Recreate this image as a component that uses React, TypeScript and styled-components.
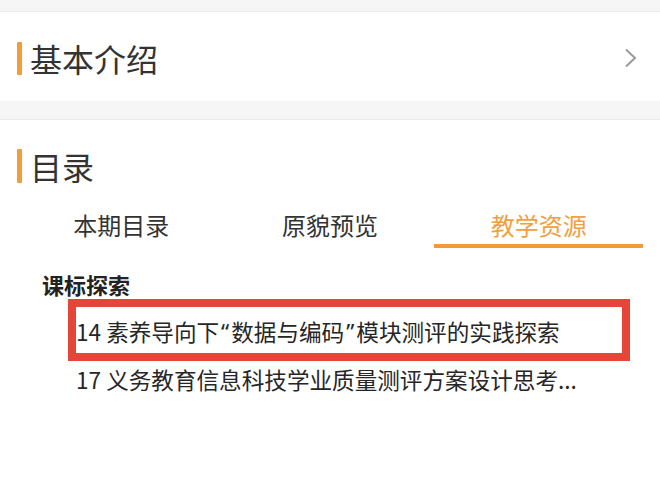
import React from "react";
import styled, { createGlobalStyle } from "styled-components";

const Global = createGlobalStyle`
  html, body { margin: 0; padding: 0; background: #ffffff; }
  body { font-family: "Noto Sans CJK SC", "Noto Sans", sans-serif; color: #333; }
  * { box-sizing: border-box; }
`;

const Page = styled.div`
  display: flex;
  flex-direction: column;
  background: #ffffff;
  min-height: 497px;
`;

const Gap = styled.div<{ $h: number }>`
  height: ${(p) => p.$h}px;
  background: #f6f6f6;
  border-bottom: 1px solid #ebebeb;
`;

const IntroCard = styled.section`
  display: flex;
  align-items: center;
  justify-content: space-between;
  padding: 29px 22px 26px 17px;
  background: #fff;
`;

const Heading = styled.div`
  display: flex;
  align-items: center;
  gap: 8px;
`;

const Bar = styled.span<{ $h: number }>`
  width: 5px;
  height: ${(p) => p.$h}px;
  background: #f19e3a;
  border-radius: 1px;
`;

const HeadingText = styled.h2`
  margin: 0;
  font-size: 32px;
  line-height: 34px;
  font-weight: 400;
  color: #333;
`;

const Chevron = styled.svg`
  width: 14px;
  height: 20px;
  display: block;
`;

const CatalogCard = styled.section`
  display: flex;
  flex-direction: column;
  padding: 29px 17px 0 17px;
  background: #fff;
`;

const Tabs = styled.div`
  display: flex;
  margin-top: 26px;
`;

const Tab = styled.div<{ $active?: boolean }>`
  flex: 1;
  display: flex;
  flex-direction: column;
  align-items: center;
  font-size: 24px;
  line-height: 32px;
  padding-bottom: 3px;
  color: ${(p) => (p.$active ? "#f0a040" : "#333")};
  &::after {
    content: "";
    align-self: stretch;
    height: 4px;
    margin-top: 3px;
    background: ${(p) => (p.$active ? "#f29a35" : "transparent")};
  }
`;

const SubHeader = styled.h3`
  margin: 18px 0 0 25px;
  font-size: 22px;
  line-height: 30px;
  font-weight: 700;
  color: #222;
`;

const List = styled.div`
  display: flex;
  flex-direction: column;
  margin-top: 8px;
  padding-left: 59px;
`;

const Item = styled.div<{ $marked?: boolean }>`
  position: relative;
  height: 48px;
  display: flex;
  align-items: center;
  font-size: 22.6px;
  color: #262626;
  white-space: nowrap;
  &::after {
    content: "";
    display: ${(p) => (p.$marked ? "block" : "none")};
    position: absolute;
    left: -8px;
    top: -8px;
    right: 13px;
    bottom: -6px;
    border: 8px solid #e4463a;
  }
`;

const Quote = styled.span`
  font-family: "Noto Sans", "Liberation Sans", sans-serif;
  margin: 0 2px;
`;

export default function App() {
  return (
    <>
      <Global />
      <Page>
        <Gap $h={12} />
        <IntroCard>
          <Heading>
            <Bar $h={33} />
            <HeadingText>基本介绍</HeadingText>
          </Heading>
          <Chevron viewBox="0 0 14 20">
            <path d="M2 1.5 L11 10 L2 18.5" fill="none" stroke="#9a9a9a" strokeWidth="2" />
          </Chevron>
        </IntroCard>
        <Gap $h={19} />
        <CatalogCard>
          <Heading>
            <Bar $h={34} />
            <HeadingText>目录</HeadingText>
          </Heading>
          <Tabs>
            <Tab>本期目录</Tab>
            <Tab>原貌预览</Tab>
            <Tab $active>教学资源</Tab>
          </Tabs>
          <SubHeader>课标探索</SubHeader>
          <List>
            <Item $marked>
              14 素养导向下<Quote>“</Quote>数据与编码<Quote>”</Quote>模块测评的实践探索
            </Item>
            <Item>17 义务教育信息科技学业质量测评方案设计思考...</Item>
          </List>
        </CatalogCard>
      </Page>
    </>
  );
}
